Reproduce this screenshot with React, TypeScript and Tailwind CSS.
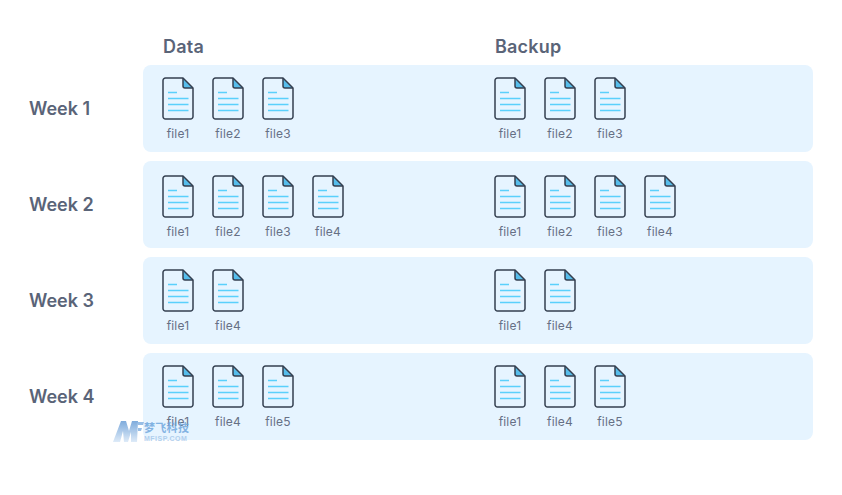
const WEEKS = [
  { label: "Week 1", files: ["file1", "file2", "file3"], top: "pt-3" },
  { label: "Week 2", files: ["file1", "file2", "file3", "file4"], top: "pt-3.5" },
  { label: "Week 3", files: ["file1", "file4"], top: "pt-3" },
  { label: "Week 4", files: ["file1", "file4", "file5"], top: "pt-3" },
];

function FileIcon() {
  return (
    <svg width="32" height="43" viewBox="0 0 32 43" fill="none" className="block">
      <path d="M21 1.5 L30.5 11 L21 11 Z" fill="#56bdeb" />
      <path
        d="M21 1H3.5A2.5 2.5 0 0 0 1 3.5V39.5A2.5 2.5 0 0 0 3.5 42H28.5A2.5 2.5 0 0 0 31 39.5V11L21 1Z"
        stroke="#343f50"
        strokeWidth="1.5"
        strokeLinejoin="round"
      />
      <path d="M21 1V9A2 2 0 0 0 23 11H31" stroke="#343f50" strokeWidth="1.5" strokeLinejoin="round" />
      <path d="M6 15.5H15M6 21.5H26.5M6 27.5H26.5M6 33.5H26.5" stroke="#5ad0fc" strokeWidth="1.6" />
    </svg>
  );
}

function FileItem({ name }: { name: string }) {
  return (
    <div className="flex w-[50px] flex-col">
      <div className="-ml-px">
        <FileIcon />
      </div>
      <span className="mt-[6px] w-[30px] text-center text-xs leading-[16px] tracking-[0.2px] text-[#667085]">
        {name}
      </span>
    </div>
  );
}

function FileGroup({ files }: { files: string[] }) {
  return (
    <div className="flex w-[332px] shrink-0">
      {files.map((file, i) => (
        <FileItem key={i} name={file} />
      ))}
    </div>
  );
}

function Watermark() {
  return (
    <div className="absolute left-[113px] top-[420px] flex h-[24px] w-[78px] items-start opacity-80">
      <svg width="31" height="23" viewBox="0 0 31 23" className="shrink-0">
        <defs>
          <linearGradient id="mark" x1="0" y1="0" x2="0" y2="1">
            <stop offset="0" stopColor="#5f97d4" />
            <stop offset="1" stopColor="#d6e6f7" />
          </linearGradient>
        </defs>
        <path
          d="M0 22 L8 1 H13 L16 11 L19 1 H25 L24 22 H18 L18 12 L15 22 H11 L10 11 L7 22 Z"
          fill="url(#mark)"
        />
        <path d="M25 2 H31 L30 5 H25 Z M25 8 H29 L28 11 H25 Z" fill="#7fafe0" />
      </svg>
      <div className="flex flex-col">
        <span className="whitespace-nowrap font-['Noto_Sans_CJK_SC',sans-serif] text-[11px] font-bold leading-[15px] tracking-[0.3px] text-[#6aa3dc]">
          梦飞科技
        </span>
        <span className="whitespace-nowrap font-['Liberation_Sans',sans-serif] text-[7px] font-bold leading-[8px] tracking-[0.5px] text-[#a3c6ea]">
          MFISP.COM
        </span>
      </div>
    </div>
  );
}

export default function App() {
  return (
    <div className="relative h-[495px] w-[842px] overflow-hidden bg-white pt-[36px] font-['Inter',sans-serif]">
      <div className="mb-[9px] flex h-[20px] items-center pl-[163px] pt-px text-lg font-semibold tracking-[0.2px] text-[#5a6478]">
        <div className="w-[332px]">Data</div>
        <div>Backup</div>
      </div>
      <div className="flex flex-col gap-[9px]">
        {WEEKS.map((week) => (
          <div key={week.label} className="flex items-center">
            <div className="w-[143px] pl-[29px] text-lg font-semibold text-[#5a6478]">{week.label}</div>
            <div className={`flex h-[87px] w-[670px] rounded-lg bg-[#e6f4ff] px-5 ${week.top}`}>
              <FileGroup files={week.files} />
              <FileGroup files={week.files} />
            </div>
          </div>
        ))}
      </div>
      <Watermark />
    </div>
  );
}
